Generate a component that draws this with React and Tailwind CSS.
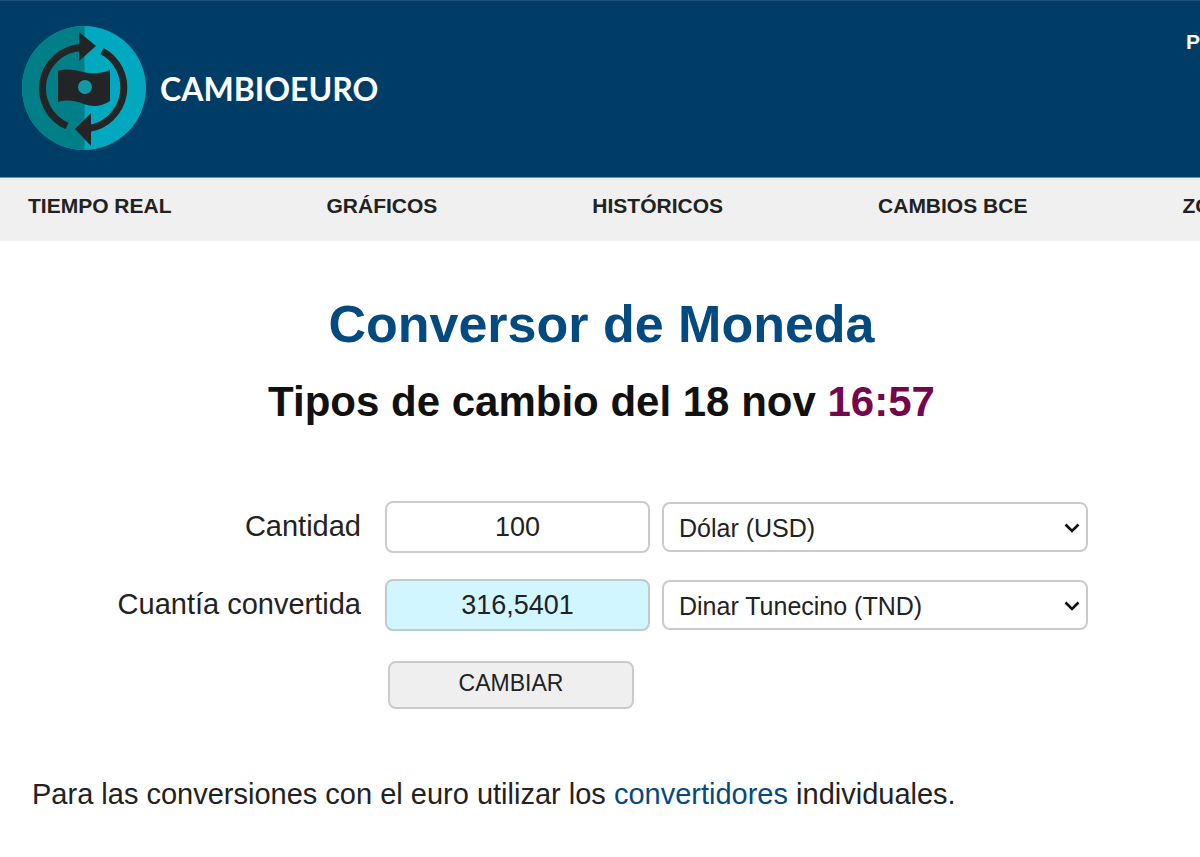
import React, { useState } from 'react';

const navLinks = ['TIEMPO REAL', 'GRÁFICOS', 'HISTÓRICOS', 'CAMBIOS BCE', 'ZO'];

const currencies = [
  { code: 'USD', name: 'Dólar (USD)' },
  { code: 'TND', name: 'Dinar Tunecino (TND)' },
];

const Logo = () => (
  <svg viewBox="0 0 140 140" className="size-[140px] shrink-0" aria-hidden="true">
    <circle cx="69" cy="69" r="62" fill="#00a9bf" />
    <path d="M69.500 7H69a62 62 0 0 0 0 124h.5z" fill="#007f88" />
    <g fill="none" stroke="#222425" strokeWidth="7">
      <path d="M52 107A41 41 0 0 1 66 28.500" />
      <path d="M87 32A41.500 41.500 0 0 1 74 109.500" />
    </g>
    <path d="M64 13 81 27 64 42z" fill="#222425" />
    <path d="M76 94v33L60 110z" fill="#222425" />
    <path
      d="M43 52c9-3 17-1 25 1s18 2 27-2v31c-9 6-18 6-26 3s-17-5-26-2z"
      fill="#222425"
    />
    <circle cx="70" cy="68" r="7" fill="#1497a5" />
  </svg>
);

const CurrencySelect = ({ id, label, value, onChange }) => (
  <div className="relative w-[426px]">
    <select
      id={id}
      aria-label={label}
      value={value}
      onChange={(e) => onChange(e.target.value)}
      className="block h-[50px] w-full appearance-none rounded-lg border-2 border-[#cbcbcb] bg-white pl-[15px] pr-10 pt-[3px] text-[25px] text-[#222]"
    >
      {currencies.map((currency) => (
        <option key={currency.code} value={currency.code}>
          {currency.name}
        </option>
      ))}
    </select>
    <svg
      viewBox="0 0 16 10"
      className="pointer-events-none absolute right-2 top-[21px] h-[10px] w-4"
      fill="none"
      stroke="#111"
      strokeWidth="2.6"
      aria-hidden="true"
    >
      <path d="M1.500 1.500 8 8l6.500-6.500" />
    </svg>
  </div>
);

const App = () => {
  const [amount, setAmount] = useState('100');
  const [from, setFrom] = useState('USD');
  const [to, setTo] = useState('TND');

  return (
    <div className="min-h-screen overflow-hidden bg-white font-['Liberation_Sans',Arial,sans-serif] text-[#222]">
      <header className="flex h-[178px] items-center justify-between border-b border-t border-b-[#6f8fb0] border-t-[#1b5379] bg-[#003d66] pl-[15px]">
        <a href="#" className="flex items-center gap-[5px] font-['Lato',sans-serif] text-[32px] font-bold leading-9 text-white">
          <Logo />
          <span>CAMBIOEURO</span>
        </a>
        <a href="#" className="mt-[29px] self-start text-[21px] font-bold leading-6 text-white">
          P
        </a>
      </header>

      <nav className="flex h-[63px] gap-[155px] overflow-hidden bg-[#f0f0f0] pl-7 pt-4">
        {navLinks.map((link) => (
          <a key={link} href="#" className="shrink-0 whitespace-nowrap text-[21px] font-bold leading-6">
            {link}
          </a>
        ))}
      </nav>

      <main>
        <div className="pl-[3px] pt-[53px] text-center font-bold">
          <h1 className="text-[52px] leading-[60px] text-[#034a80]">Conversor de Moneda</h1>
          <h2 className="mt-5 text-[42px] leading-[56px] text-[#111]">
            Tipos de cambio del 18 nov <span className="text-[#75054d]">16:57</span>
          </h2>
        </div>

        <form
          className="mx-auto mt-[71px] flex w-[976px] flex-col gap-[26px]"
          onSubmit={(e) => e.preventDefault()}
        >
          <div className="flex items-center">
            <label htmlFor="amount" className="w-[249px] text-right text-[29px]">
              Cantidad
            </label>
            <input
              id="amount"
              value={amount}
              onChange={(e) => setAmount(e.target.value)}
              className="ml-6 mr-3 h-[52px] w-[265px] rounded-lg border-2 border-[#cbcbcb] bg-white text-center text-[27px]"
            />
            <CurrencySelect id="from" label="Moneda de origen" value={from} onChange={setFrom} />
          </div>
          <div className="flex items-center">
            <label htmlFor="result" className="w-[249px] text-right text-[29px]">
              Cuantía convertida
            </label>
            <input
              id="result"
              readOnly
              value="316,5401"
              className="ml-6 mr-3 h-[52px] w-[265px] rounded-lg border-2 border-[#bccbce] bg-[#d2f6ff] text-center text-[27px]"
            />
            <CurrencySelect id="to" label="Moneda de destino" value={to} onChange={setTo} />
          </div>
          <button
            type="submit"
            className="ml-[276px] mt-1 h-12 w-[246px] rounded-lg border-2 border-[#cbcbcb] bg-[#efefef] pb-[3px] text-[23px]"
          >
            CAMBIAR
          </button>
        </form>

        <p className="mt-[65px] px-8 text-[29px] leading-10">
          Para las conversiones con el euro utilizar los{' '}
          <a href="#" className="text-[#034a80]">
            convertidores
          </a>{' '}
          individuales.
        </p>
      </main>
    </div>
  );
};

export default App;
